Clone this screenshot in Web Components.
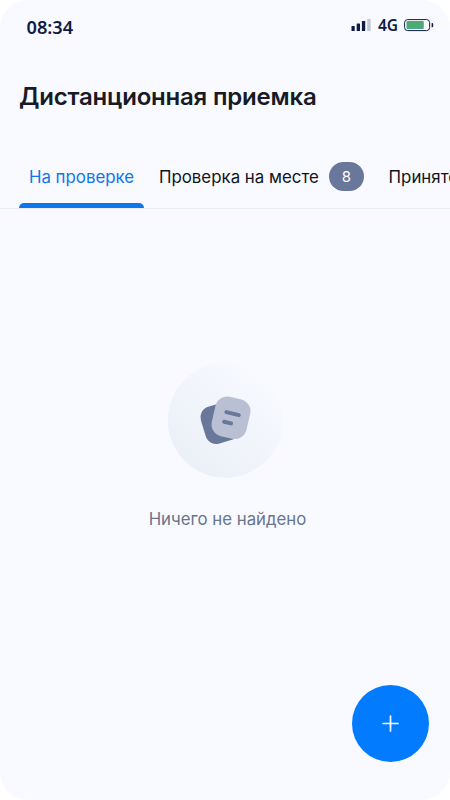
<!DOCTYPE html>
<html lang="ru">
<head>
<meta charset="UTF-8">
<meta name="viewport" content="width=device-width, initial-scale=1">
<title>Дистанционная приемка</title>
<style>
  body {
    margin: 0;
    background: #fff;
    font-family: Inter, "Liberation Sans", sans-serif;
    overflow: hidden;
  }
</style>
</head>
<body>
<app-screen>
  <status-bar slot="status" time="08:34" network="4G"></status-bar>
  <page-title slot="title">Дистанционная приемка</page-title>
  <tab-bar slot="tabs">
    <tab-item active>На проверке</tab-item>
    <tab-item count="8">Проверка на месте</tab-item>
    <tab-item>Принято</tab-item>
  </tab-bar>
  <empty-state>Ничего не найдено</empty-state>
  <add-button slot="action"></add-button>
</app-screen>

<script>
// ==================================================
// <app-screen>
// ==================================================
class AppScreen extends HTMLElement {
  constructor() {
    super();
    this.attachShadow({ mode: "open" });

    this.shadowRoot.innerHTML = `
      <style>
        :host {
          position: relative;
          display: flex;
          flex-direction: column;
          width: 450px;
          height: 800px;
          background: #f8faff;
          border-radius: 28px;
          overflow: hidden;
        }
        main {
          flex: 1;
          display: flex;
          flex-direction: column;
          align-items: center;
        }
        .action {
          position: absolute;
          right: 21px;
          bottom: 38px;
        }
      </style>
      <slot name="status"></slot>
      <slot name="title"></slot>
      <slot name="tabs"></slot>
      <main><slot></slot></main>
      <div class="action"><slot name="action"></slot></div>
    `;
  }
}

customElements.define("app-screen", AppScreen);

// ==================================================
// <status-bar>
// ==================================================
class StatusBar extends HTMLElement {
  constructor() {
    super();
    this.attachShadow({ mode: "open" });

    this.shadowRoot.innerHTML = `
      <style>
        :host {
          display: flex;
          justify-content: space-between;
          align-items: center;
          box-sizing: border-box;
          height: 54px;
          padding: 0 16px 0 26.5px;
          color: #0f1b45;
          font-family: "Noto Sans", "Open Sans", sans-serif;
          font-weight: 600;
        }
        .time { font-size: 18.2px; }
        .right { display: flex; align-items: center; margin-top: -4px; }
        .network { margin: 0 6px 0 7px; font-size: 15.5px; line-height: 20px; }
        svg { display: block; }
      </style>
      <span class="time"></span>
      <div class="right">
        <svg width="20" height="13" viewBox="0 0 20 13">
          <rect x="0.5" y="7" width="3.2" height="5" rx=".6" fill="#0f1b45"/>
          <rect x="5.7" y="4.5" width="3.3" height="7.5" rx=".6" fill="#0f1b45"/>
          <rect x="10.9" y="2" width="3.3" height="10" rx=".6" fill="#0f1b45"/>
          <rect x="16.2" y="0" width="3.5" height="12" rx=".6" fill="#c4c9d3"/>
        </svg>
        <span class="network"></span>
        <svg width="30" height="13" viewBox="0 0 30 13">
          <rect x=".6" y=".6" width="25" height="11" rx="3" fill="#fff" stroke="#0f1b45"/>
          <rect x="2.5" y="2.1" width="17.3" height="8" rx="1" fill="#4bab78"/>
          <path d="M27.6 4h.6q1 0 1 1v2.2q0 1-1 1h-.6z" fill="#0f1b45"/>
        </svg>
      </div>
    `;
  }

  connectedCallback() {
    this.shadowRoot.querySelector(".time").textContent = this.getAttribute("time");
    this.shadowRoot.querySelector(".network").textContent = this.getAttribute("network");
  }
}

customElements.define("status-bar", StatusBar);

// ==================================================
// <page-title>
// ==================================================
class PageTitle extends HTMLElement {
  constructor() {
    super();
    this.attachShadow({ mode: "open" });

    this.shadowRoot.innerHTML = `
      <style>
        :host { display: block; padding: 27px 19px 0; }
        h1 {
          margin: 0;
          font-size: 24px;
          line-height: 32px;
          font-weight: 600;
          letter-spacing: -0.2px;
          color: #181b25;
          white-space: nowrap;
        }
      </style>
      <h1><slot></slot></h1>
    `;
  }
}

customElements.define("page-title", PageTitle);

// ==================================================
// <tab-bar>
// ==================================================
class TabBar extends HTMLElement {
  constructor() {
    super();
    this.attachShadow({ mode: "open" });

    this.shadowRoot.innerHTML = `
      <style>
        :host {
          display: flex;
          gap: 5px;
          height: 63px;
          margin-top: 32px;
          padding-left: 19px;
          border-bottom: 1px solid #e7eaf0;
          overflow: hidden;
        }
      </style>
      <slot></slot>
    `;
  }
}

customElements.define("tab-bar", TabBar);

// ==================================================
// <tab-item>
// ==================================================
class TabItem extends HTMLElement {
  constructor() {
    super();
    this.attachShadow({ mode: "open" });

    this.shadowRoot.innerHTML = `
      <style>
        :host {
          display: flex;
          flex: none;
          flex-direction: column;
          justify-content: space-between;
          color: #11141d;
          font-size: 16.85px;
        }
        .label {
          display: flex;
          align-items: center;
          gap: 10px;
          height: 62px;
          padding: 0 9.9px;
          white-space: nowrap;
        }
        .name { padding-top: 1px; }
        .badge {
          width: 35px;
          border-radius: 14.5px;
          background: #69779a;
          color: #fff;
          font-size: 15px;
          line-height: 29px;
          text-align: center;
        }
        .badge:empty { display: none; }
        .line { height: 5px; margin-top: -5px; border-radius: 5px 5px 0 0; }
        :host([active]) { color: #0d76ea; }
        :host([active]) .line { background: #0d76ea; }
      </style>
      <div class="label"><span class="name"><slot></slot></span><span class="badge"></span></div>
      <div class="line"></div>
    `;
  }

  connectedCallback() {
    this.shadowRoot.querySelector(".badge").textContent = this.getAttribute("count") || "";
  }
}

customElements.define("tab-item", TabItem);

// ==================================================
// <empty-state>
// ==================================================
class EmptyState extends HTMLElement {
  constructor() {
    super();
    this.attachShadow({ mode: "open" });

    this.shadowRoot.innerHTML = `
      <style>
        :host {
          display: flex;
          flex-direction: column;
          align-items: center;
          padding-top: 153px;
        }
        svg { display: block; }
        p {
          margin: 29px 0 0 5px;
          font-size: 16.8px;
          line-height: 24px;
          color: #69748f;
        }
      </style>
      <svg width="116" height="116" viewBox="0 0 116 116">
        <defs>
          <linearGradient id="disc" x1="0.15" y1="0.9" x2="0.85" y2="0.1">
            <stop offset="0" stop-color="#ebeff7"/>
            <stop offset="1" stop-color="#f8faff"/>
          </linearGradient>
        </defs>
        <circle cx="58.3" cy="58.3" r="57.5" fill="url(#disc)"/>
        <rect x="35.6" y="42" width="35" height="38.5" rx="11" fill="#69779a" transform="rotate(-17 53 61.3)"/>
        <rect x="46.2" y="35.6" width="35.6" height="40.4" rx="12" fill="#b9c0d4" transform="rotate(13 64 55.8)"/>
        <path d="M59.4 50.1l12.4 3M57.1 59.7l7 1.7" stroke="#69779a" stroke-width="4" stroke-linecap="round"/>
      </svg>
      <p><slot></slot></p>
    `;
  }
}

customElements.define("empty-state", EmptyState);

// ==================================================
// <add-button>
// ==================================================
class AddButton extends HTMLElement {
  constructor() {
    super();
    this.attachShadow({ mode: "open" });

    this.shadowRoot.innerHTML = `
      <style>
        :host { display: block; }
        button {
          display: flex;
          align-items: center;
          justify-content: center;
          width: 77px;
          height: 77px;
          padding: 0;
          border: 0;
          border-radius: 50%;
          background: #027bff;
        }
      </style>
      <button aria-label="Добавить">
        <svg width="17" height="17" viewBox="0 0 17 17">
          <path d="M8.5 1v15M1 8.5h15" stroke="#fff" stroke-width="1.7" stroke-linecap="round"/>
        </svg>
      </button>
    `;
  }
}

customElements.define("add-button", AddButton);
</script>
</body>
</html>
